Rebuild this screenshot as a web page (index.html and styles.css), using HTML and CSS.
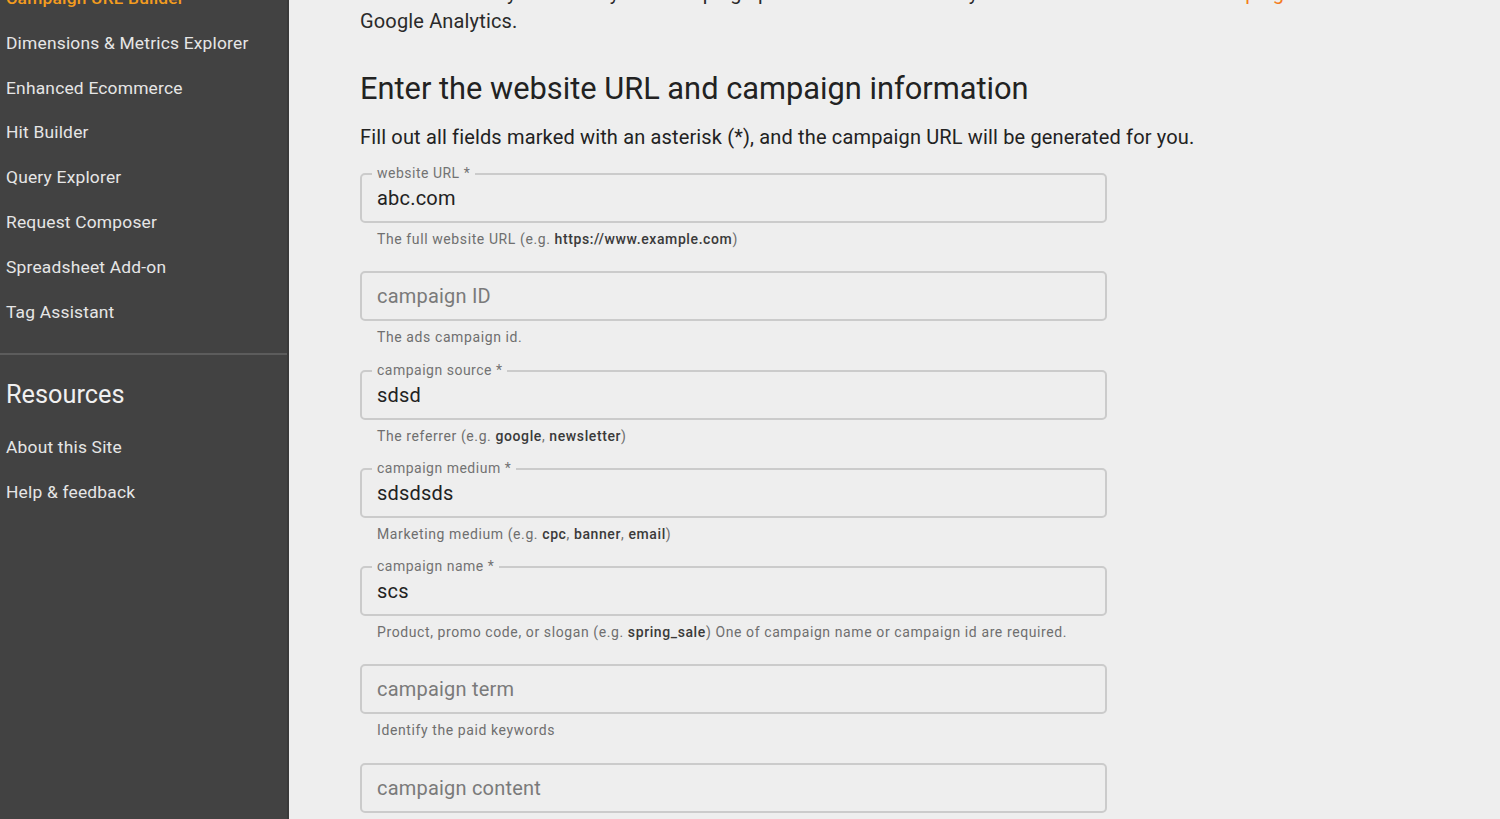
FILE: index.html
```html
<!DOCTYPE html>
<html>

<head>
    <title>Campaign URL Builder</title>
    <link rel="stylesheet" href="styles.css">
</head>

<body>
    <nav class="sidebar">
        <ul class="nav-list">
            <li><a class="nav-link active" href="#">Campaign URL Builder</a></li>
            <li><a class="nav-link" href="#">Dimensions &amp; Metrics Explorer</a></li>
            <li><a class="nav-link" href="#">Enhanced Ecommerce</a></li>
            <li><a class="nav-link" href="#">Hit Builder</a></li>
            <li><a class="nav-link" href="#">Query Explorer</a></li>
            <li><a class="nav-link" href="#">Request Composer</a></li>
            <li><a class="nav-link" href="#">Spreadsheet Add-on</a></li>
            <li><a class="nav-link" href="#">Tag Assistant</a></li>
        </ul>
        <hr class="nav-divider">
        <h3 class="nav-heading">Resources</h3>
        <ul class="nav-list">
            <li><a class="nav-link" href="#">About this Site</a></li>
            <li><a class="nav-link" href="#">Help &amp; feedback</a></li>
        </ul>
    </nav>

    <main class="content">
        <p class="intro">This tool allows you to easily add campaign parameters to URLs so you can measure
            <a href="#">Custom Campaigns</a> in Google Analytics.</p>

        <h2>Enter the website URL and campaign information</h2>
        <p class="lead">Fill out all fields marked with an asterisk (*), and the campaign URL will be generated for you.</p>

        <form class="fields">
            <div class="field">
                <div class="box">
                    <label>website URL *</label>
                    <input type="text" value="abc.com">
                </div>
                <p class="hint">The full website URL (e.g. <b>https://www.example.com</b>)</p>
            </div>
            <div class="field">
                <div class="box">
                    <input type="text" placeholder="campaign ID">
                </div>
                <p class="hint">The ads campaign id.</p>
            </div>
            <div class="field">
                <div class="box">
                    <label>campaign source *</label>
                    <input type="text" value="sdsd">
                </div>
                <p class="hint">The referrer (e.g. <b>google</b>, <b>newsletter</b>)</p>
            </div>
            <div class="field">
                <div class="box">
                    <label>campaign medium *</label>
                    <input type="text" value="sdsdsds">
                </div>
                <p class="hint">Marketing medium (e.g. <b>cpc</b>, <b>banner</b>, <b>email</b>)</p>
            </div>
            <div class="field">
                <div class="box">
                    <label>campaign name *</label>
                    <input type="text" value="scs">
                </div>
                <p class="hint">Product, promo code, or slogan (e.g. <b>spring_sale</b>) One of campaign name or campaign id are required.</p>
            </div>
            <div class="field">
                <div class="box">
                    <input type="text" placeholder="campaign term">
                </div>
                <p class="hint">Identify the paid keywords</p>
            </div>
            <div class="field">
                <div class="box">
                    <input type="text" placeholder="campaign content">
                </div>
                <p class="hint">Use to differentiate ads</p>
            </div>
        </form>
    </main>
</body>

</html>
```

FILE: styles.css
```css
html,
body {
    height: 100%;
}

body {
    margin: 0;
    display: flex;
    overflow: hidden;
    font-family: Roboto, "Noto Sans", sans-serif;
    background-color: #eeeeee;
    color: #222222;
}

/* Sidebar */
.sidebar {
    flex: 0 0 287px;
    background-color: #424242;
    border-right: 2px solid #3a3a3a;
    height: 100%;
}

.sidebar .nav-list:first-child {
    margin-top: -24px;
}

.nav-list {
    list-style: none;
    margin: 0;
    padding: 0;
}

.nav-link {
    display: block;
    padding: 0 6px;
    line-height: 44.8px;
    font-size: 17.4px;
    color: #e6e6e6;
    text-decoration: none;
    letter-spacing: 0.2px;
}

.nav-link.active {
    color: #f39c1f;
    font-weight: 500;
}

.nav-divider {
    margin: 19px 0 0;
    border: none;
    height: 2px;
    background-color: #5c5c5c;
}

.nav-heading {
    margin: 24px 0 14px;
    padding: 0 6px;
    font-size: 25.3px;
    line-height: 32px;
    font-weight: 400;
    color: #f0f0f0;
}

/* Main content */
.content {
    flex: 1;
    padding-left: 71px;
    margin-top: -21px;
}

.intro {
    margin: 0;
    max-width: 980px;
    font-size: 20px;
    line-height: 28px;
    letter-spacing: 0.15px;
    color: #2a2a2a;
}

.intro a {
    color: #f47c20;
    text-decoration: none;
}

h2 {
    margin: 34px 0 0;
    font-size: 30.8px;
    line-height: 40px;
    font-weight: 400;
    color: #222222;
}

.lead {
    margin: 14px 0 0;
    font-size: 20px;
    line-height: 28px;
    letter-spacing: 0.15px;
    color: #222222;
}

.fields {
    margin-top: 22px;
    width: 747px;
}

.field {
    margin-bottom: 22.3px;
}

.box {
    position: relative;
    height: 50px;
    box-sizing: border-box;
    border: 2px solid #cbcbcb;
    border-radius: 5px;
}

.box label {
    position: absolute;
    top: -11px;
    left: 10px;
    padding: 0 5px;
    background-color: #eeeeee;
    font-size: 14px;
    line-height: 18px;
    letter-spacing: 0.5px;
    color: #737373;
}

.box input {
    width: 100%;
    height: 100%;
    box-sizing: border-box;
    padding: 0 15px;
    border: none;
    background: transparent;
    font-family: inherit;
    font-size: 20px;
    letter-spacing: 0.2px;
    color: #222222;
    outline: none;
}

.box input::placeholder {
    color: #7a7a7a;
}

.hint {
    margin: 6px 0 0 17px;
    font-size: 14px;
    line-height: 20px;
    color: #6f6f6f;
    letter-spacing: 0.6px;
}

.hint b {
    font-weight: 500;
    color: #3a3a3a;
}
```
